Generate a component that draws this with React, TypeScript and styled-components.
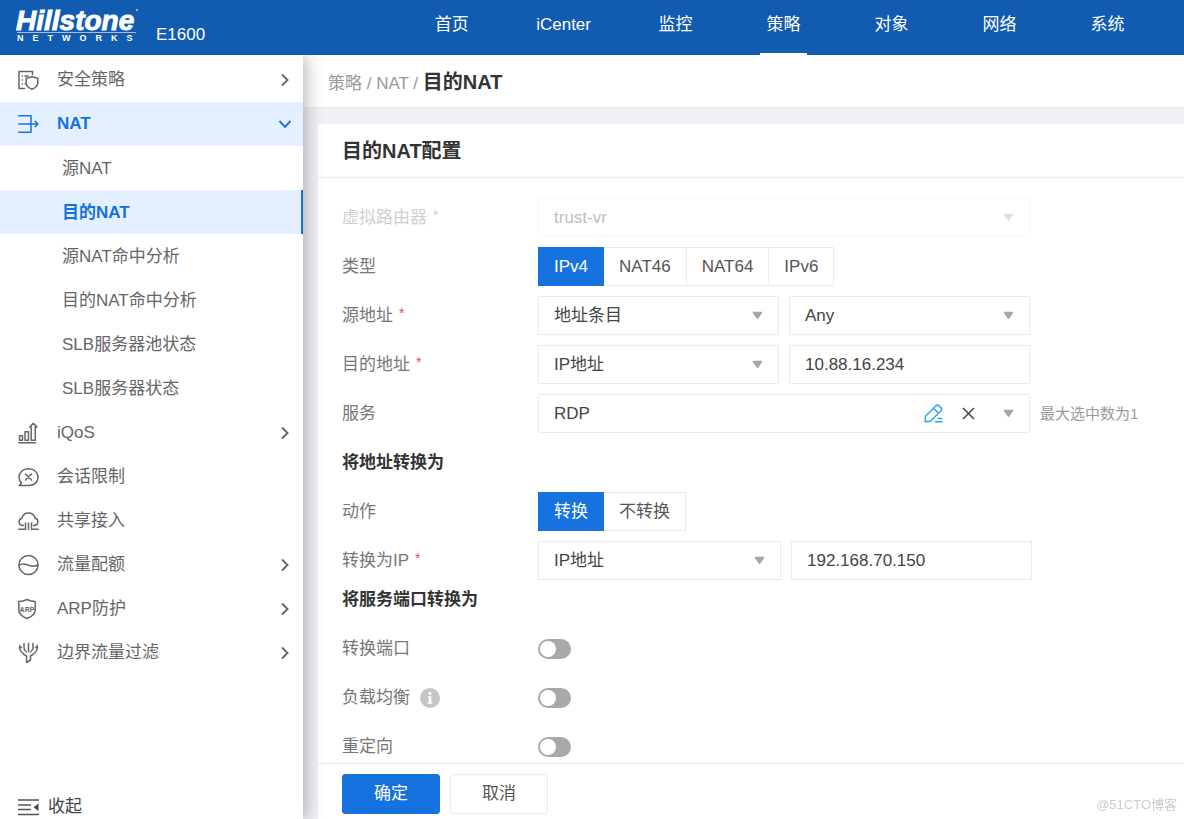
import React, { useId, useState } from "react";
import styled, { createGlobalStyle, css } from "styled-components";

const blue = "#1672de";
const line = "#ebebeb";

const GlobalStyle = createGlobalStyle`
  *, *::before, *::after { box-sizing: border-box; }
  body {
    margin: 0;
    font-family: "Liberation Sans", "Noto Sans CJK SC", sans-serif;
    font-size: 17px;
    line-height: 24px;
    color: #666;
    background: #eff1f5;
  }
  button, input, select { font: inherit; color: inherit; margin: 0; }
  button { cursor: pointer; }
  a { color: inherit; text-decoration: none; }
  svg { display: block; flex: none; }
`;

const Page = styled.div`
  display: flex;
  flex-direction: column;
  height: 100vh;
`;

const TopBar = styled.header`
  flex: none;
  display: flex;
  height: 55px;
  padding: 0 53px 0 16px;
  background: #115bb0;
  color: #fff;
`;

const Brand = styled.a`
  display: flex;
  gap: 8px;
  align-items: flex-end;
  padding-bottom: 8px;
`;

const Model = styled.span`
  font-size: 17px;
`;

const Nav = styled.nav`
  flex: 1;
  display: flex;
  justify-content: flex-end;
  gap: 61px;
`;

const NavLink = styled.a<{ $active?: boolean }>`
  min-width: 47px;
  line-height: 49px;
  text-align: center;
  border-bottom: 2px solid ${(p) => (p.$active ? "#fff" : "transparent")};
`;

const Content = styled.div`
  flex: 1;
  display: flex;
  min-height: 0;
`;

const Sidebar = styled.aside`
  z-index: 1;
  flex: none;
  display: flex;
  flex-direction: column;
  width: 303px;
  padding: 3px 0 0;
  background: #fff;
  box-shadow: 3px 0 16px rgba(40, 44, 60, 0.34);
  clip-path: inset(0 -24px 0 0);
`;

const Menu = styled.ul`
  flex: 1;
  list-style: none;
  margin: 0;
  padding: 0;
`;

const SubMenu = styled(Menu)`
  padding-bottom: 1px;
`;

const MenuButton = styled.button<{ $open?: boolean }>`
  display: flex;
  align-items: center;
  width: 100%;
  height: 44px;
  padding: 0 11px 0 18px;
  border: 0;
  background: transparent;
  text-align: left;
  ${(p) =>
    p.$open &&
    css`
      background: #e4f0ff;
      color: ${blue};
      font-weight: 700;
    `}
`;

const MenuText = styled.span`
  flex: 1;
  padding-left: 18px;
`;

const SubLink = styled.a<{ $active?: boolean }>`
  display: block;
  height: 44px;
  padding-left: 62px;
  line-height: 45px;
  ${(p) =>
    p.$active &&
    css`
      background: #e4f0ff;
      color: ${blue};
      font-weight: 700;
      border-right: 2px solid ${blue};
    `}
`;

const CollapseButton = styled.button`
  display: flex;
  align-items: center;
  gap: 9px;
  padding: 0 18px;
  border: 0;
  background: none;
  color: #444;
`;

const Main = styled.main`
  flex: 1;
  display: flex;
  flex-direction: column;
  min-width: 0;
`;

const Breadcrumb = styled.nav`
  flex: none;
  height: 53px;
  padding-left: 25px;
  line-height: 54px;
  background: #fff;
  color: #999;
  border-bottom: 1px solid #ebecee;
`;

const Current = styled.strong`
  font-size: 20px;
  color: #333;
`;

const Panel = styled.form`
  flex: 1;
  display: flex;
  flex-direction: column;
  min-height: 0;
  margin: 16px 0 0 15px;
  background: #fff;
`;

const PanelTitle = styled.h1`
  flex: none;
  height: 54px;
  margin: 0;
  padding-left: 24px;
  font-size: 20px;
  line-height: 55px;
  color: #333;
  border-bottom: 1px solid ${line};
`;

const PanelBody = styled.div`
  flex: 1;
  min-height: 0;
  overflow: hidden;
  padding: 20px 24px 0;
`;

const Section = styled.section<{ $tight?: boolean }>`
  display: grid;
  gap: 10px;
  margin-bottom: ${(p) => (p.$tight ? 0 : 10)}px;
`;

const SectionTitle = styled.h2`
  margin: 0;
  font-size: 17px;
  line-height: 40px;
  height: 39px;
  color: #333;
`;

const Row = styled.div<{ $disabled?: boolean }>`
  display: flex;
  align-items: center;
  height: 39px;
  opacity: ${(p) => (p.$disabled ? 0.35 : 1)};
`;

const Label = styled.label`
  flex: none;
  display: flex;
  align-items: center;
  gap: 10px;
  width: 196px;
  color: #777;
`;

const Star = styled.span`
  margin-left: 6px;
  font-size: 14px;
  line-height: 1;
  vertical-align: 3px;
  color: #f04848;
`;

const Fields = styled.div`
  display: flex;
  align-items: center;
  gap: 10px;
`;

const Box = styled.span<{ $size?: "full" | "wide" }>`
  display: flex;
  align-items: center;
  width: ${(p) => (p.$size === "full" ? 492 : p.$size === "wide" ? 243 : 241)}px;
  height: 39px;
  border: 1px solid ${line};
  background: #fff;
  color: #444;
`;

const Select = styled.select`
  grid-area: 1 / 1;
  appearance: none;
  width: 100%;
  height: 100%;
  padding: 0 40px 0 15px;
  border: 0;
  background: transparent;
  opacity: 1;
`;

const SelectWrap = styled.span`
  flex: 1;
  display: grid;
  align-items: center;
  height: 100%;
`;

const ArrowSlot = styled.span`
  grid-area: 1 / 1;
  justify-self: end;
  padding-right: 15px;
  pointer-events: none;
`;

const TextInput = styled.input`
  flex: 1;
  min-width: 0;
  height: 100%;
  padding: 0 15px;
  border: 0;
  background: transparent;
`;

const BoxActions = styled.span`
  display: flex;
  align-items: center;
  gap: 19px;
  padding-right: 15px;
`;

const IconButton = styled.button`
  display: flex;
  padding: 0;
  border: 0;
  background: none;
`;

const ArrowButton = styled(IconButton)`
  padding-left: 9px;
`;

const Hint = styled.span`
  font-size: 15px;
  color: #999;
`;

const Segments = styled.div`
  display: flex;
`;

const Segment = styled.button<{ $active?: boolean }>`
  position: relative;
  z-index: ${(p) => (p.$active ? 1 : 0)};
  height: 39px;
  padding: 0 15px;
  border: 1px solid ${(p) => (p.$active ? blue : line)};
  background: ${(p) => (p.$active ? blue : "#fff")};
  color: ${(p) => (p.$active ? "#fff" : "#555")};
  & + & {
    margin-left: -1px;
  }
`;

const Switch = styled.input`
  appearance: none;
  display: flex;
  align-items: center;
  width: 33px;
  height: 20px;
  padding: 2px;
  border-radius: 10px;
  background: #a9a9a9;
  cursor: pointer;
  &::before {
    content: "";
    width: 16px;
    height: 16px;
    border-radius: 50%;
    background: #fff;
  }
  &:checked {
    justify-content: flex-end;
    background: ${blue};
  }
`;

const PanelFooter = styled.footer`
  flex: none;
  display: flex;
  gap: 10px;
  padding: 10px 24px 5px;
  border-top: 1px solid ${line};
`;

const Button = styled.button<{ $primary?: boolean }>`
  width: 98px;
  height: 40px;
  padding: 0;
  border: 1px solid ${(p) => (p.$primary ? blue : line)};
  border-radius: 3px;
  background: ${(p) => (p.$primary ? blue : "#fff")};
  color: ${(p) => (p.$primary ? "#fff" : "#555")};
`;

const Watermark = styled.small`
  position: fixed;
  right: 7px;
  bottom: 2px;
  font-size: 13px;
  color: #ccc;
`;

const Logo = () => (
  <svg width="132" height="44" viewBox="0 0 132 44" fill="#fff" role="img" aria-label="Hillstone Networks">
    <text x="0" y="27" fontSize="28" fontWeight="700" fontStyle="italic" stroke="#fff" strokeWidth="0.9">Hillstone</text>
    <rect x="1" y="29" width="119" height="1" opacity=".6" />
    <text x="1" y="38" fontSize="9" fontWeight="700" letterSpacing="9">NETWORKS</text>
    <circle cx="121" cy="7" r="1" opacity=".7" />
  </svg>
);

const Icon = ({ children }: { children: React.ReactNode }) => (
  <svg width="21" height="22" viewBox="0 0 21 22" fill="none" stroke="currentColor" strokeWidth="1.500" strokeLinecap="round" strokeLinejoin="round" aria-hidden="true">
    {children}
  </svg>
);

const icons = {
  policy: (
    <Icon>
      <path d="M6.500 19.500H1V2.500H14.500V5.500" />
      <path d="M4.200 7h.3M7 7h3M4.200 11h.3M4.200 15h.3M7 15h.3" />
      <path d="M14 7.800l5.800 1.500v4.500c0 3.200-2.600 5.200-5.800 6.500-3.200-1.300-5.800-3.300-5.800-6.500V9.300z" />
    </Icon>
  ),
  nat: (
    <Icon>
      <path d="M.8 2.800H13V19.200H.8M.8 11H20M17.200 8.400L20 11l-2.800 2.600" />
    </Icon>
  ),
  qos: (
    <Icon>
      <path d="M.8 20.800H17.500M1.500 18.200v-4.500h3v4.500zM7 18.200V9.800h3.500v8.400zM13.200 18.200V5h-1.500L15.300 1.200 19 5h-1.700V18.200z" />
    </Icon>
  ),
  session: (
    <Icon>
      <path d="M1.200 19.400H11c5.500 0 9-3.400 9-8.200S16.200 2.800 10.500 2.800 1 6.500 1 11.200c0 2.600 1 4.500 2.600 5.800z" />
      <path d="M7.500 8l6 6M13.500 8l-6 6" />
    </Icon>
  ),
  share: (
    <Icon>
      <path d="M5.500 15.500H4.500A3.700 3.700 0 0 1 4 8.200C4.700 5 7.200 3 10.500 3s5.800 2 6.500 5.200a3.700 3.700 0 0 1-.5 7.300H15.500" />
      <path d="M.8 19.200H7.500V13M10.500 13V19.200M13.500 13V19.200H20.200" />
    </Icon>
  ),
  quota: (
    <Icon>
      <circle cx="10.500" cy="11" r="9.600" />
      <path d="M1 11.500c3.500-2.500 6.500-1.500 9.500-.3s6 1.500 9.500-.2" />
    </Icon>
  ),
  arp: (
    <Icon>
      <path d="M9 1.500c2.600 1.500 5 2 8.200 2V12c0 4-3.700 6.800-8.200 8.500C4.500 18.800.8 16 .8 12V3.500C4 3.500 6.400 3 9 1.500z" />
      <text x="9" y="13.500" textAnchor="middle" fontSize="7" fontWeight="700" fill="currentColor" stroke="none">ARP</text>
    </Icon>
  ),
  filter: (
    <Icon>
      <path d="M6 1.500V5.500c0 2.300 1 3.500 2.500 4.500M10.500 1.500V9.500M15 1.500V5.500c0 2.300-1 3.500-2.500 4.500" />
      <path d="M2 3.500L1.500 5.500c.3 4 3 6.200 7 8.500v6.500l4-2.500V14c4-2.300 6.700-4.500 7-8.500L19 3.500M1.500 5.500h2M19.500 5.500h-2" />
    </Icon>
  ),
};

const Chevron = ({ open }: { open?: boolean }) => (
  <svg width="14" height="14" viewBox="0 0 14 14" fill="none" stroke="currentColor" strokeWidth="1.900" aria-hidden="true">
    <path d={open ? "M1.500 4L7 9.800 12.500 4" : "M4 1.500L9.500 7 4 12.500"} />
  </svg>
);

const Arrow = () => (
  <svg width="11" height="9" viewBox="0 0 11 9" fill="#a6a6a6" aria-hidden="true">
    <path d="M1.500.8h8q1.300 0 .6 1.200L6.300 7.600q-.8 1-1.600 0L.9 2Q.2.8 1.500.8z" />
  </svg>
);

const PencilIcon = () => (
  <svg width="19" height="19" viewBox="0 0 19 19" fill="none" stroke="#2ea3f2" strokeWidth="1.500" strokeLinejoin="round" aria-hidden="true">
    <path d="M1.200 17.800l.3-5.500L12 1.800q1.500-1.300 3 0l2 2q1.300 1.500 0 3L6.500 17.200zM9.500 4.200l5 5" />
    <path d="M13.500 14.500H18.500M11 17.800h7.500" />
  </svg>
);

const CrossIcon = () => (
  <svg width="13" height="13" viewBox="0 0 13 13" stroke="#444" strokeWidth="1.500" aria-hidden="true">
    <path d="M1 1l11 11M12 1L1 12" />
  </svg>
);

const InfoIcon = () => (
  <svg width="20" height="20" viewBox="0 0 20 20" aria-hidden="true">
    <circle cx="10" cy="10" r="10" fill="#c6c6c6" />
    <circle cx="10" cy="5.200" r="1.500" fill="#fff" />
    <path d="M7.800 8.200h3.500v6.300h1.200v1.200H7.500v-1.200h1.300V9.400h-1z" fill="#fff" />
  </svg>
);

const CollapseIcon = () => (
  <svg width="21" height="18" viewBox="0 0 21 18" stroke="#555" strokeWidth="1.500" aria-hidden="true">
    <path d="M0 2h21M0 7h13M0 11.500h13M0 16.500h21" />
    <path d="M20.500 5.500v7.500l-5-3.700z" fill="#444" stroke="none" />
  </svg>
);

const navItems = ["首页", "iCenter", "监控", "策略", "对象", "网络", "系统"];

const menu: { icon: keyof typeof icons; text: string; expandable?: boolean; children?: string[] }[] = [
  { icon: "policy", text: "安全策略", expandable: true },
  {
    icon: "nat",
    text: "NAT",
    expandable: true,
    children: ["源NAT", "目的NAT", "源NAT命中分析", "目的NAT命中分析", "SLB服务器池状态", "SLB服务器状态"],
  },
  { icon: "qos", text: "iQoS", expandable: true },
  { icon: "session", text: "会话限制" },
  { icon: "share", text: "共享接入" },
  { icon: "quota", text: "流量配额", expandable: true },
  { icon: "arp", text: "ARP防护", expandable: true },
  { icon: "filter", text: "边界流量过滤", expandable: true },
];

interface DropdownProps {
  id?: string;
  name?: string;
  value: string;
  size?: "full" | "wide";
  disabled?: boolean;
}

const Dropdown = ({ id, name, value, size, disabled }: DropdownProps) => (
  <Box $size={size}>
    <SelectWrap>
      <Select id={id} aria-label={name} defaultValue={value} disabled={disabled}>
        <option>{value}</option>
      </Select>
      <ArrowSlot>
        <Arrow />
      </ArrowSlot>
    </SelectWrap>
  </Box>
);

const Segmented = ({ options, label }: { options: string[]; label: string }) => {
  const [selected, setSelected] = useState(options[0]);
  return (
    <Segments role="group" aria-label={label}>
      {options.map((o) => (
        <Segment key={o} type="button" $active={o === selected} aria-pressed={o === selected} onClick={() => setSelected(o)}>
          {o}
        </Segment>
      ))}
    </Segments>
  );
};

interface FieldProps {
  label: string;
  required?: boolean;
  disabled?: boolean;
  info?: boolean;
  children: (id: string) => React.ReactNode;
}

const Field = ({ label, required, disabled, info, children }: FieldProps) => {
  const id = useId();
  return (
    <Row $disabled={disabled}>
      <Label htmlFor={id}>
        <span>
          {label}
          {required && <Star>*</Star>}
        </span>
        {info && <InfoIcon />}
      </Label>
      <Fields>{children(id)}</Fields>
    </Row>
  );
};

export default function App() {
  return (
    <Page lang="zh-CN">
      <GlobalStyle />
      <TopBar>
        <Brand href="#">
          <Logo />
          <Model>E1600</Model>
        </Brand>
        <Nav>
          {navItems.map((item) => (
            <NavLink key={item} href="#" $active={item === "策略"}>
              {item}
            </NavLink>
          ))}
        </Nav>
      </TopBar>
      <Content>
        <Sidebar>
          <Menu>
            {menu.map(({ icon, text, expandable, children }) => (
              <li key={text}>
                <MenuButton type="button" $open={!!children} aria-expanded={expandable ? !!children : undefined}>
                  {icons[icon]}
                  <MenuText>{text}</MenuText>
                  {expandable && <Chevron open={!!children} />}
                </MenuButton>
                {children && (
                  <SubMenu>
                    {children.map((c) => (
                      <li key={c}>
                        <SubLink href="#" $active={c === "目的NAT"}>
                          {c}
                        </SubLink>
                      </li>
                    ))}
                  </SubMenu>
                )}
              </li>
            ))}
          </Menu>
          <CollapseButton type="button">
            <CollapseIcon />
            收起
          </CollapseButton>
        </Sidebar>
        <Main>
          <Breadcrumb>
            <a href="#">策略</a> / <a href="#">NAT</a> / <Current>目的NAT</Current>
          </Breadcrumb>
          <Panel onSubmit={(e) => e.preventDefault()}>
            <PanelTitle>目的NAT配置</PanelTitle>
            <PanelBody>
              <Section>
                <Field label="虚拟路由器" required disabled>
                  {(id) => <Dropdown id={id} value="trust-vr" size="full" disabled />}
                </Field>
                <Field label="类型">{() => <Segmented label="类型" options={["IPv4", "NAT46", "NAT64", "IPv6"]} />}</Field>
                <Field label="源地址" required>
                  {(id) => (
                    <>
                      <Dropdown id={id} value="地址条目" />
                      <Dropdown name="源地址" value="Any" />
                    </>
                  )}
                </Field>
                <Field label="目的地址" required>
                  {(id) => (
                    <>
                      <Dropdown id={id} value="IP地址" />
                      <Box>
                        <TextInput aria-label="目的地址" defaultValue="10.88.16.234" />
                      </Box>
                    </>
                  )}
                </Field>
                <Field label="服务">
                  {(id) => (
                    <>
                      <Box $size="full">
                        <TextInput id={id} defaultValue="RDP" />
                        <BoxActions>
                          <IconButton type="button" aria-label="编辑">
                            <PencilIcon />
                          </IconButton>
                          <IconButton type="button" aria-label="清除">
                            <CrossIcon />
                          </IconButton>
                          <ArrowButton type="button" aria-label="展开">
                            <Arrow />
                          </ArrowButton>
                        </BoxActions>
                      </Box>
                      <Hint>最大选中数为1</Hint>
                    </>
                  )}
                </Field>
              </Section>
              <Section $tight>
                <SectionTitle>将地址转换为</SectionTitle>
                <Field label="动作">{() => <Segmented label="动作" options={["转换", "不转换"]} />}</Field>
                <Field label="转换为IP" required>
                  {(id) => (
                    <>
                      <Dropdown id={id} value="IP地址" size="wide" />
                      <Box>
                        <TextInput aria-label="转换为IP" defaultValue="192.168.70.150" />
                      </Box>
                    </>
                  )}
                </Field>
              </Section>
              <Section>
                <SectionTitle>将服务端口转换为</SectionTitle>
                <Field label="转换端口">{(id) => <Switch id={id} type="checkbox" role="switch" />}</Field>
                <Field label="负载均衡" info>
                  {(id) => <Switch id={id} type="checkbox" role="switch" />}
                </Field>
                <Field label="重定向">{(id) => <Switch id={id} type="checkbox" role="switch" />}</Field>
              </Section>
            </PanelBody>
            <PanelFooter>
              <Button type="submit" $primary>
                确定
              </Button>
              <Button type="button">取消</Button>
            </PanelFooter>
          </Panel>
        </Main>
      </Content>
      <Watermark>@51CTO博客</Watermark>
    </Page>
  );
}
